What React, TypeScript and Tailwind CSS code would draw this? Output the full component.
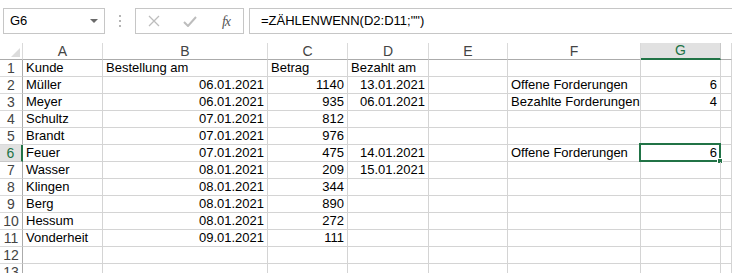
import React from 'react';

type Cell = { v: string; right?: boolean };

const cols = ['A', 'B', 'C', 'D', 'E', 'F', 'G', ''];

const rows: Cell[][] = [
  [{ v: 'Kunde' }, { v: 'Bestellung am' }, { v: 'Betrag' }, { v: 'Bezahlt am' }, { v: '' }, { v: '' }, { v: '' }],
  [{ v: 'Müller' }, { v: '06.01.2021', right: true }, { v: '1140', right: true }, { v: '13.01.2021', right: true }, { v: '' }, { v: 'Offene Forderungen' }, { v: '6', right: true }],
  [{ v: 'Meyer' }, { v: '06.01.2021', right: true }, { v: '935', right: true }, { v: '06.01.2021', right: true }, { v: '' }, { v: 'Bezahlte Forderungen' }, { v: '4', right: true }],
  [{ v: 'Schultz' }, { v: '07.01.2021', right: true }, { v: '812', right: true }, { v: '' }, { v: '' }, { v: '' }, { v: '' }],
  [{ v: 'Brandt' }, { v: '07.01.2021', right: true }, { v: '976', right: true }, { v: '' }, { v: '' }, { v: '' }, { v: '' }],
  [{ v: 'Feuer' }, { v: '07.01.2021', right: true }, { v: '475', right: true }, { v: '14.01.2021', right: true }, { v: '' }, { v: 'Offene Forderungen' }, { v: '6', right: true }],
  [{ v: 'Wasser' }, { v: '08.01.2021', right: true }, { v: '209', right: true }, { v: '15.01.2021', right: true }, { v: '' }, { v: '' }, { v: '' }],
  [{ v: 'Klingen' }, { v: '08.01.2021', right: true }, { v: '344', right: true }, { v: '' }, { v: '' }, { v: '' }, { v: '' }],
  [{ v: 'Berg' }, { v: '08.01.2021', right: true }, { v: '890', right: true }, { v: '' }, { v: '' }, { v: '' }, { v: '' }],
  [{ v: 'Hessum' }, { v: '08.01.2021', right: true }, { v: '272', right: true }, { v: '' }, { v: '' }, { v: '' }, { v: '' }],
  [{ v: 'Vonderheit' }, { v: '09.01.2021', right: true }, { v: '111', right: true }, { v: '' }, { v: '' }, { v: '' }, { v: '' }],
  [{ v: '' }, { v: '' }, { v: '' }, { v: '' }, { v: '' }, { v: '' }, { v: '' }],
  [{ v: '' }, { v: '' }, { v: '' }, { v: '' }, { v: '' }, { v: '' }, { v: '' }],
];

function Toolbar() {
  return (
    <div className="h-[43px] flex items-start pt-[8px] bg-white">
      {/* name box */}
      <div className="ml-[3px] w-[102px] h-[26px] border border-[#c6c6c6] flex items-center justify-between pl-[6px] pr-[6px]">
        <span className="text-[13px] text-black">G6</span>
        <svg width="8" height="5" viewBox="0 0 8 5">
          <path d="M0 0 L8 0 L4 4 Z" fill="#6a6a6a" />
        </svg>
      </div>
      {/* dots */}
      <div className="w-[30px] h-[26px] flex flex-col items-center justify-center gap-[3px]">
        <div className="w-[2px] h-[2px] bg-[#b5b5b5]" />
        <div className="w-[2px] h-[2px] bg-[#b5b5b5]" />
        <div className="w-[2px] h-[2px] bg-[#b5b5b5]" />
      </div>
      {/* buttons */}
      <div className="w-[109px] h-[26px] border border-[#c6c6c6] flex items-center">
        <div className="w-[34px] flex justify-center ml-[1px]">
          <svg width="12" height="12" viewBox="0 0 12 12">
            <path d="M1 1 L11 11 M11 1 L1 11" stroke="#bdbdbd" strokeWidth="1.3" />
          </svg>
        </div>
        <div className="w-[38px] flex justify-center">
          <svg width="14" height="11" viewBox="0 0 14 11">
            <path d="M1 6 L5 10 L13 1" stroke="#bdbdbd" strokeWidth="2" fill="none" />
          </svg>
        </div>
        <div className="w-[34px] flex justify-center">
          <span className="text-[14px] italic text-[#555] tracking-[-1px]" style={{ fontFamily: '"Liberation Serif", serif' }}>
            fx
          </span>
        </div>
      </div>
      {/* formula box */}
      <div className="ml-[5px] flex-1 h-[26px] border border-[#c6c6c6] border-r-0 flex items-center pl-[11px]">
        <span className="text-[13px] text-black">=ZÄHLENWENN(D2:D11;"")</span>
      </div>
    </div>
  );
}

export default function App() {
  return (
    <div
      className="w-[732px] h-[273px] overflow-hidden bg-white"
      style={{ fontFamily: '"Liberation Sans", Arial, sans-serif' }}
    >
      <Toolbar />
      <div className="grid grid-cols-[23px_80px_165px_80px_81px_79px_133px_80px_1fr] auto-rows-[17px]">
        {/* corner */}
        <div className="border-r border-b border-[#ababab] border-r-[#dadada] relative">
          <svg className="absolute right-[2px] bottom-[2px]" width="9" height="9" viewBox="0 0 9 9">
            <path d="M9 0 L9 9 L0 9 Z" fill="#dcdcdc" />
          </svg>
        </div>
        {cols.map((c, i) =>
          c === 'G' ? (
            <div
              key={i}
              className="bg-[#e1e1e1] border-r border-[#c8c8c8] border-b-2 border-b-[#217346] flex items-center justify-center text-[14px] text-[#217346]"
            >
              {c}
            </div>
          ) : (
            <div
              key={i}
              className="border-r border-[#dadada] border-b border-b-[#ababab] flex items-center justify-center text-[14px] text-[#444]"
            >
              {c}
            </div>
          )
        )}
        {rows.map((r, ri) => (
          <React.Fragment key={ri}>
            {ri === 5 ? (
              <div className="bg-[#e1e1e1] border-r-2 border-r-[#217346] border-b border-b-[#c8c8c8] flex items-center justify-center text-[14px] text-[#217346]">
                {ri + 1}
              </div>
            ) : (
              <div className="border-r border-[#ababab] border-b border-b-[#dadada] flex items-center justify-center text-[14px] text-[#444]">
                {ri + 1}
              </div>
            )}
            {r.map((cell, ci) => (
              <div
                key={ci}
                className={
                  'relative border-r border-b border-[#d4d4d4] flex items-center px-[3px] text-[13px] text-black whitespace-nowrap ' +
                  (cell.right ? 'justify-end' : 'justify-start')
                }
              >
                {cell.v}
                {ri === 5 && ci === 6 && (
                  <div className="absolute left-[-2px] top-[-2px] right-[-1px] bottom-[-1px] border-2 border-[#217346]">
                    <div className="absolute right-[-4px] bottom-[-4px] w-[6px] h-[6px] bg-[#217346] border border-white" />
                  </div>
                )}
              </div>
            ))}
            <div className="border-r border-b border-[#d4d4d4]" />
          </React.Fragment>
        ))}
      </div>
    </div>
  );
}
